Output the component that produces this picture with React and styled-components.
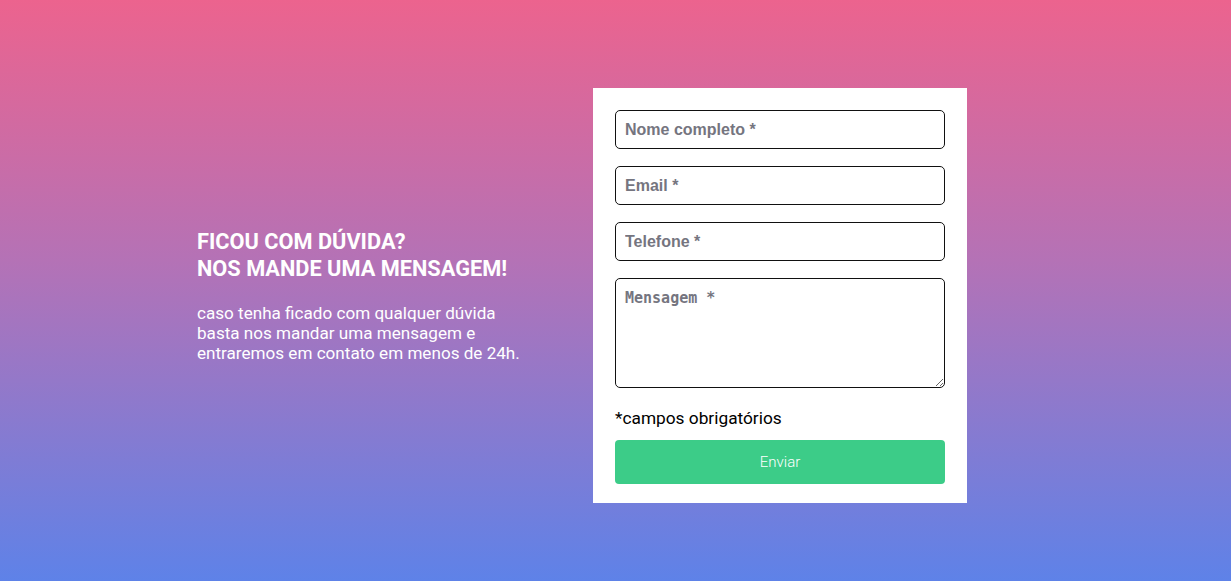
import React from 'react';
import styled, { createGlobalStyle } from 'styled-components';

const GlobalStyle = createGlobalStyle`
  * {
    box-sizing: border-box;
  }
  body {
    margin: 0;
    font-family: Roboto, "Liberation Sans", sans-serif;
  }
`;

const Page = styled.div`
  min-height: 581px;
  background: linear-gradient(180deg, #ec638e 0%, #b472b6 45%, #5e82e8 100%);
  display: flex;
  align-items: center;
  padding: 88px 0 78px 197px;
`;

const Intro = styled.div`
  width: 396px;
  color: #fff;
`;

const Title = styled.h2`
  margin: 0 0 21px;
  font-size: 21.75px;
  line-height: 27px;
  font-weight: 700;
  text-transform: uppercase;
`;

const Text = styled.p`
  margin: 0;
  width: 330px;
  font-size: 17.1px;
  line-height: 20px;
  font-weight: 400;
`;

const Card = styled.form`
  width: 374px;
  background: #fff;
  padding: 22px 22px 19px;
  display: flex;
  flex-direction: column;
`;

const Field = styled.input`
  height: 39px;
  margin-bottom: 17px;
  border: 1px solid #111;
  border-radius: 5px;
  padding: 0 9px;
  font: bold 16px "Liberation Sans", Arial, sans-serif;
  color: #333;
  &::placeholder {
    color: #75757f;
  }
`;

const Area = styled.textarea`
  height: 110px;
  border: 1px solid #111;
  border-radius: 5px;
  padding: 10px 9px;
  font: bold 15px "DejaVu Sans Mono", monospace;
  resize: vertical;
  &::placeholder {
    color: #75757f;
  }
`;

const Note = styled.p`
  margin: 20px 0 12px;
  font-size: 17.3px;
  line-height: 20px;
  color: #000;
`;

const Submit = styled.button`
  height: 44px;
  border: none;
  border-radius: 4px;
  background: #3ccc88;
  color: #fff;
  font-family: Roboto, sans-serif;
  font-weight: 300;
  font-size: 15px;
  cursor: pointer;
`;

const App = () => (
  <>
    <GlobalStyle />
    <Page>
      <Intro>
        <Title>
          Ficou com dúvida?
          <br />
          Nos mande uma mensagem!
        </Title>
        <Text>
          caso tenha ficado com qualquer dúvida basta nos mandar uma mensagem e entraremos em
          contato em menos de 24h.
        </Text>
      </Intro>
      <Card onSubmit={(e) => e.preventDefault()}>
        <Field placeholder="Nome completo *" />
        <Field placeholder="Email *" />
        <Field placeholder="Telefone *" />
        <Area placeholder="Mensagem *" />
        <Note>*campos obrigatórios</Note>
        <Submit type="submit">Enviar</Submit>
      </Card>
    </Page>
  </>
);

export default App;
